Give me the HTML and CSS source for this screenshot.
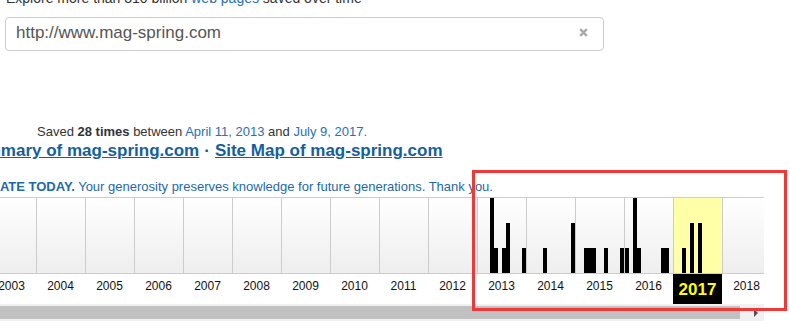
FILE: index.html
```html
<!DOCTYPE html>
<html>
<head>
<meta charset="utf-8">
<link rel="stylesheet" href="styles.css">
</head>
<body>
<div class="page">
  <div class="explore">Explore more than 310 billion <a class="lnk">web pages</a> saved over time</div>
  <div class="search">
    <span class="url">http://www.mag-spring.com</span>
    <svg class="clear" width="9" height="9" viewBox="0 0 9 9"><path d="M1.2 1.2L7.8 7.8M7.8 1.2L1.2 7.8" stroke="#aaaaaa" stroke-width="2.4" stroke-linecap="butt"/></svg>
  </div>
  <div class="saved">Saved <b>28 times</b> between <a class="date">April 11, 2013</a> and <a class="date">July 9, 2017.</a></div>
  <div class="links"><a class="big">Summary of mag-spring.com</a><span class="sep">·</span><a class="big">Site Map of mag-spring.com</a></div>
  <div class="donate"><b>DONATE TODAY.</b> Your generosity preserves knowledge for future generations. Thank you.</div>

  <div class="timeline">
    <div class="track">
      <div class="chart">
        <div class="col"></div>
        <div class="col"></div>
        <div class="col"></div>
        <div class="col"></div>
        <div class="col"></div>
        <div class="col"></div>
        <div class="col"></div>
        <div class="col"></div>
        <div class="col"></div>
        <div class="col"></div>
        <div class="col"><i></i><i></i><i></i><i style="height:75px"></i><i style="height:25px"></i><i></i><i style="height:25px"></i><i style="height:50px"></i><i></i><i></i><i></i><i style="height:25px"></i></div>
        <div class="col"><i></i><i></i><i></i><i></i><i style="height:25px"></i><i></i><i></i><i></i><i></i><i></i><i></i><i style="height:50px"></i></div>
        <div class="col"><i></i><i></i><i style="height:25px"></i><i style="height:25px"></i><i style="height:25px"></i><i></i><i></i><i style="height:25px"></i><i></i><i></i><i></i><i style="height:25px"></i></div>
        <div class="col"><i style="height:25px"></i><i></i><i style="height:75px"></i><i style="height:25px"></i><i></i><i></i><i></i><i></i><i></i><i style="height:25px"></i><i style="height:25px"></i><i></i></div>
        <div class="col hl"><i></i><i></i><i style="height:25px"></i><i></i><i style="height:50px"></i><i></i><i style="height:50px"></i><i></i><i></i><i></i><i></i><i></i></div>
        <div class="col"></div>
      </div>
      <div class="years">
        <span class="year">2003</span>
        <span class="year">2004</span>
        <span class="year">2005</span>
        <span class="year">2006</span>
        <span class="year">2007</span>
        <span class="year">2008</span>
        <span class="year">2009</span>
        <span class="year">2010</span>
        <span class="year">2011</span>
        <span class="year">2012</span>
        <span class="year">2013</span>
        <span class="year">2014</span>
        <span class="year">2015</span>
        <span class="year">2016</span>
        <span class="year cur">2017</span>
        <span class="year">2018</span>
      </div>
    </div>
    <div class="scroll"><div class="thumb"></div><span class="arrow"></span></div>
  </div>

  <div class="highlight"></div>
</div>
</body>
</html>
```
FILE: styles.css
```css
html, body {
  margin: 0;
  padding: 0;
  background: #fff;
  overflow: hidden;
}
body {
  font-family: "Liberation Sans", Arial, sans-serif;
  color: #333;
}
.page {
  position: relative;
  width: 790px;
  height: 331px;
}
a { text-decoration: none; }

.explore {
  margin-top: -10px;
  padding-left: 6px;
  font-size: 14px;
  line-height: 16px;
  color: #333;
  white-space: nowrap;
}
.lnk { color: #2a6fb5; }

.search {
  margin: 11px 0 0 5px;
  width: 599px;
  height: 34px;
  box-sizing: border-box;
  border: 1px solid #cccccc;
  border-radius: 4px;
  padding: 0 15px 3px 10px;
  display: flex;
  align-items: center;
}
.url {
  font-size: 17px;
  line-height: 20px;
  color: #555;
}
.clear {
  margin-left: auto;
  display: block;
}

.saved {
  margin-top: 73px;
  padding-left: 37px;
  font-size: 13px;
  line-height: 16px;
  color: #333;
  white-space: nowrap;
}
.saved b { color: #333; }
.date { color: #2a6fb5; }

.links {
  margin: 1px 0 0 -36px;
  font-size: 17px;
  font-weight: bold;
  line-height: 20px;
  white-space: nowrap;
  color: #145f9e;
}
.big {
  color: #145f9e;
  text-decoration: underline;
}
.sep { margin: 0 5px; }

.donate {
  margin: 18px 0 0 -29px;
  font-size: 13px;
  line-height: 16px;
  color: #1f68a8;
  white-space: nowrap;
}

.timeline {
  margin-top: 2px;
  width: 764px;
  overflow: hidden;
}
.track {
  margin-left: -13px;
  width: 800px;
}
.chart {
  display: flex;
  height: 75px;
  border-top: 1px solid #cccccc;
  border-bottom: 1px solid #cccccc;
}
.col {
  flex: none;
  width: 48px;
  border-left: 1px solid #cccccc;
  background: linear-gradient(#ffffff, #eeeeee);
  display: flex;
  align-items: flex-end;
}
.col.hl { background: #ffffa8; }
.col i {
  flex: none;
  width: 4px;
  background: #000;
}

.years {
  display: flex;
  height: 30px;
}
.year {
  flex: none;
  width: 49px;
  box-sizing: border-box;
  padding-top: 5px;
  text-align: center;
  font-size: 12px;
  line-height: 14px;
  color: #111;
}
.year.cur {
  background: #000;
  color: #ffff00;
  font-size: 17px;
  font-weight: bold;
  line-height: 30px;
  padding-top: 1px;
}

.scroll {
  width: 764px;
  height: 17px;
  background: #f1f1f1;
  display: flex;
  align-items: center;
}
.thumb {
  width: 740px;
  height: 13px;
  background: #c1c1c1;
}
.arrow {
  margin-left: 14px;
  width: 0;
  height: 0;
  border-left: 4px solid #505050;
  border-top: 4px solid transparent;
  border-bottom: 4px solid transparent;
}

.highlight {
  position: absolute;
  left: 472px;
  top: 180px;
  width: 315px;
  height: 141px;
  box-sizing: border-box;
  border: 3px solid #ef3838;
}
```
